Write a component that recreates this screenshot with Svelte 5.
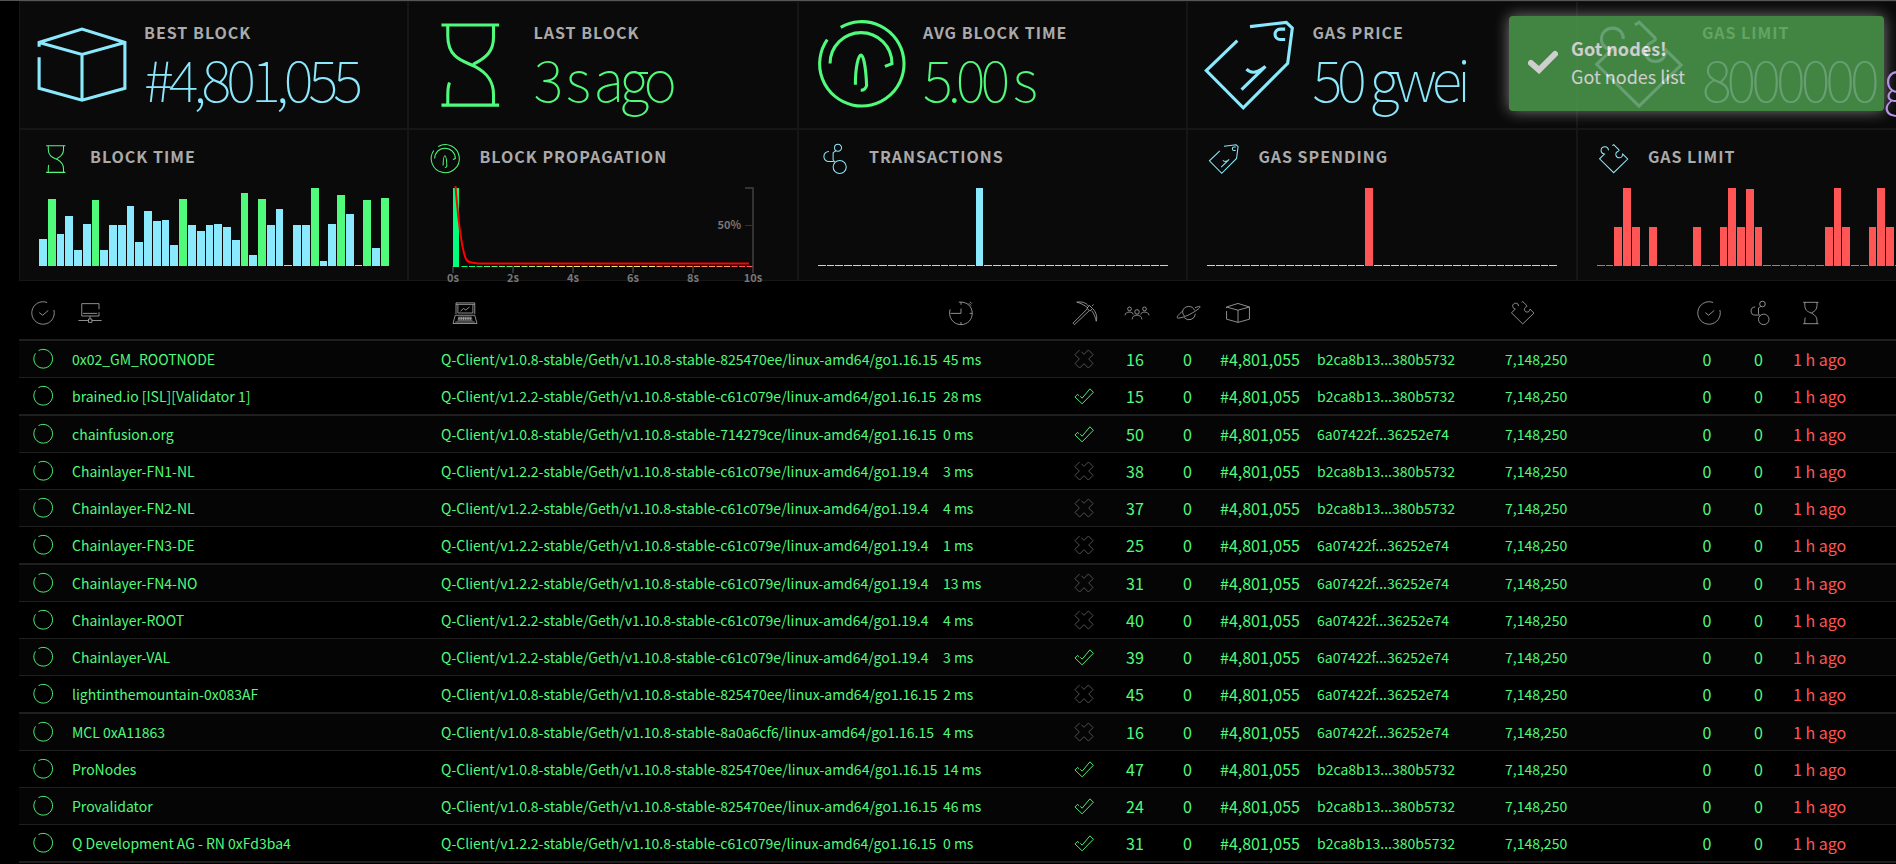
<script lang="ts">
  type Bar = { height: number; color: string };

  const CYAN = "#8be9fd";
  const GREEN = "#50fa7b";
  const RED = "#ff5555";

  const ring = (x: number, y: number, r: number) =>
    `M${x - r} ${y}a${r} ${r} 0 1 0 ${2 * r} 0a${r} ${r} 0 1 0 ${-2 * r} 0`;

  const icons: Record<string, string> = {
    block:
      "M1.5 19V16L32 6.5 62.5 16V48.5L32 57 1.5 48.5V26.5M1.5 16L32 24.5 62.5 16M32 24.5V57",
    hourglass:
      "M11 3.5h41M11 60.5h41M15.5 3.5v8C15.5 28 28 29.5 35 33.2 43 37.5 48 43 48 53v7.5M48 3.5v9C48 22 43 27 33.5 31.5M15.5 60.5v-7c0-4 .3-6.5 1.2-9",
    gauge:
      "M17.6 5.2A30 30 0 1 1 8 14M10 31A22 22 0 0 1 54 31L49 33M28 46C28 34 30 25 32 25S35.5 35 36 46.5C35.5 48.5 34 50 31.8 50",
    tag: "M32 4.7L57.8 1.7 62.1 5.7 58.8 30.8 27.2 62.4.9 36 23 14.7M57 6.5h-3.5a3.7 3.7 0 0 0 0 7.4H57M29.5 35C31 36.5 33 37.5 35.5 37 38.5 36.5 41 34.5 43 33L26 49.5",
    puzzle:
      "M28.4 3.6L31.4 1.6 42.5 12.5C44 14.5 41 15.3 38.8 16.6 33.5 20 35.5 29.5 43 29.5 47.5 29.5 50 26 50 23.5L50.5 21.5 61.2 32 31.3 61.2 1.2 31.5 11.6 21.4C1 19 3 5.8 12.5 5.8 17.5 5.8 20.5 9.5 20 13.5",
    molecule:
      ring(38.5, 8, 7.5) +
      ring(42, 49, 14) +
      "M19 16A10.5 10.5 0 1 0 19 37.500L29 37.500M34 14.500L28 18.500V34L32 39",
    checkCircle: "M61 24A30 30 0 1 1 43 4M22 31L31 38 46 25",
    circle: "M17.6 5.2A30 30 0 1 1 8 14",
    network: "M56 22V7H10V40H56V30M13 33H51M32 40v8M28 48h9v9h-9ZM1 52H28M37 52H63",
    laptop:
      "M8 35V5H58V35M8 9H58M13 10V32H53V10M20 27l8-7 6 4 10-8M6 38H58L64 60H0ZM14 43H50M13 47H51M12 51H52M16 43V51M22 43V51M28 43V51M34 43V51M40 43V51M46 43V51M6 56H58",
    stopwatch:
      "M3 22C-3 42 10 63 32 63 50 63 62 49 62 33 62 16 50 1 26 3M32 3v7M32 20V33H4M55 33h7M32 56v7M53 6l6 6M56 2l5 5",
    pickaxe:
      "M10 3C24 1 34 4 42 14M53 21C62 30 65 42 62 54M10 3C22 6 32 12 40 19M50 26C56 34 60 44 62 54M44 12l8 8-7 7-8-8ZM51 13l4-4M38 21L0 59l4 4L43 26",
    people:
      ring(12, 21, 5) +
      ring(52, 21, 5) +
      ring(32, 29, 6) +
      "M0 38C1 27 21 27 22 36M42 36C43 27 63 27 64 38M19 49C19 34 45 34 45 49",
    planet:
      "M15 27A17 17 0 0 1 47 25M19 44A17 17 0 0 0 49 34M15 27C-2 41-4 48 8 45 22 43 47 30 58 20 66 13 60 13 48 18M15 27C15 33 16 36 20 40",
    cross: "M24 9L32 17 46 3 61 18 47 32 61 46 46 61 32 47 18 61 3 46 17 32 3 18 18 3",
    check: "M20 33L26 39 51 9 62 20 26 57 3 35 11 27 16 31",
  };

  const flat = (peaks: Record<number, number>, color: string, rest = color): Bar[] =>
    Array.from({ length: 40 }, (_, i) =>
      peaks[i] ? { height: peaks[i], color } : { height: 1, color: rest },
    );

  const blockTimes: Bar[] = [
    27, 67, 32, 50, 16, 42, 66, 16, 41, 41, 60, 24, 55, 45, 46, 21, 67, 41, 35, 41,
    42, 39, 26, 73, 11, 67, 41, 57, 1, 41, 41, 78, 5, 42, 71, 52, 1, 66, 18, 68,
  ].map((height) => ({ height, color: height > 65 ? GREEN : CYAN }));

  const gasLimits = {
    2: 39, 3: 78, 4: 39, 6: 39, 11: 39, 14: 39, 15: 78, 16: 39, 17: 77, 18: 39,
    26: 39, 27: 78, 28: 39, 31: 39, 32: 78, 33: 39,
  };

  const stats = [
    { icon: "block", title: "Best block", value: "#4,801,055", tone: "info" },
    { icon: "hourglass", title: "Last block", value: "3 s ago", tone: "success" },
    { icon: "gauge", title: "Avg block time", value: "5.00 s", tone: "success" },
    { icon: "tag", title: "Gas price", value: "50 gwei", tone: "info" },
    { icon: "puzzle", title: "Gas limit", value: "8000000 gas", tone: "purple" },
  ];

  const charts: { icon: string; title: string; tone: string; bars?: Bar[] }[] = [
    { icon: "hourglass", title: "Block time", tone: "success", bars: blockTimes },
    { icon: "gauge", title: "Block propagation", tone: "success" },
    { icon: "molecule", title: "Transactions", tone: "info", bars: flat({ 18: 78 }, CYAN) },
    { icon: "tag", title: "Gas spending", tone: "info", bars: flat({ 18: 78 }, RED, CYAN) },
    { icon: "puzzle", title: "Gas limit", tone: "info", bars: flat(gasLimits, RED) },
  ];

  const propagationColor = (i: number) => {
    if (i < 3) return "#00ff7b";
    if (i < 7) return GREEN;
    if (i < 11) return "#a0f070";
    if (i < 26) return "#f1e670";
    if (i < 36) return "#ff9a55";
    return RED;
  };

  const columns = [
    { name: "state", label: "Status", icon: "checkCircle", center: true },
    { name: "node", label: "Node name", icon: "network" },
    { name: "client", label: "Node type", icon: "laptop" },
    { name: "latency", label: "Latency", icon: "stopwatch" },
    { name: "mining", label: "Mining", icon: "pickaxe", center: true },
    { name: "peers", label: "Peers", icon: "people", center: true },
    { name: "pending", label: "Pending transactions", icon: "planet", center: true },
    { name: "block", label: "Last block", icon: "block" },
    { name: "hash", label: "Block hash", icon: "" },
    { name: "gas", label: "Gas limit", icon: "puzzle" },
    { name: "valid", label: "Validated", icon: "checkCircle", center: true },
    { name: "txs", label: "Block transactions", icon: "molecule", center: true },
    { name: "time", label: "Last block time", icon: "hourglass" },
  ];

  const client = (version: string, commit: string, go: string) =>
    `Q-Client/${version}-stable/Geth/v1.10.8-stable-${commit}/linux-amd64/${go}`;

  const B2 = "b2ca8b13...380b5732";
  const A0 = "6a07422f...36252e74";
  const OLD = client("v1.0.8", "825470ee", "go1.16.15");
  const NEW = client("v1.2.2", "c61c079e", "go1.16.15");
  const NEW19 = client("v1.2.2", "c61c079e", "go1.19.4");

  const nodes = [
    { name: "0x02_GM_ROOTNODE", client: OLD, latency: 45, mining: false, peers: 16, hash: B2 },
    { name: "brained.io [ISL][Validator 1]", client: NEW, latency: 28, mining: true, peers: 15, hash: B2 },
    { name: "chainfusion.org", client: client("v1.0.8", "714279ce", "go1.16.15"), latency: 0, mining: true, peers: 50, hash: A0 },
    { name: "Chainlayer-FN1-NL", client: NEW19, latency: 3, mining: false, peers: 38, hash: B2 },
    { name: "Chainlayer-FN2-NL", client: NEW19, latency: 4, mining: false, peers: 37, hash: B2 },
    { name: "Chainlayer-FN3-DE", client: NEW19, latency: 1, mining: false, peers: 25, hash: A0 },
    { name: "Chainlayer-FN4-NO", client: NEW19, latency: 13, mining: false, peers: 31, hash: A0 },
    { name: "Chainlayer-ROOT", client: NEW19, latency: 4, mining: false, peers: 40, hash: A0 },
    { name: "Chainlayer-VAL", client: NEW19, latency: 3, mining: true, peers: 39, hash: A0 },
    { name: "lightinthemountain-0x083AF", client: OLD, latency: 2, mining: false, peers: 45, hash: A0 },
    { name: "MCL 0xA11863", client: client("v1.0.8", "8a0a6cf6", "go1.16.15"), latency: 4, mining: false, peers: 16, hash: A0 },
    { name: "ProNodes", client: OLD, latency: 14, mining: true, peers: 47, hash: B2 },
    { name: "Provalidator", client: OLD, latency: 46, mining: true, peers: 24, hash: B2 },
    { name: "Q Development AG - RN 0xFd3ba4", client: NEW, latency: 0, mining: true, peers: 31, hash: B2 },
  ];
</script>

{#snippet icon(name: string)}
  <svg class="icon" viewBox="0 0 64 64" aria-hidden="true"><path d={icons[name]} /></svg>
{/snippet}

<div class="page">
  <div class="grid">
    {#each stats as stat}
      <section class="cell stat {stat.tone}">
        {@render icon(stat.icon)}
        <div class="details">
          <h2>{stat.title}</h2>
          <p class="value">{stat.value}</p>
        </div>
      </section>
    {/each}

    {#each charts as chart}
      <section class="cell chart {chart.tone}">
        <header>
          {@render icon(chart.icon)}
          <h2>{chart.title}</h2>
        </header>
        {#if chart.bars}
          <div class="bars">
            {#each chart.bars as bar}
              <span style="height: {bar.height}px; background: {bar.color}"></span>
            {/each}
          </div>
        {:else}
          <svg class="propagation" width="300" height="78" viewBox="0 0 300 78">
            <g class="axis">
              {#each [0, 2, 4, 6, 8, 10] as second}
                <path d="M{second * 30} 78v7" />
                <text x={second * 30} y="94" text-anchor="middle">{second}s</text>
              {/each}
              <path d="M292 0H300V78" />
              <path class="thin" d="M292 37.500H300" />
              <text x="288" y="41" text-anchor="end">50%</text>
            </g>
            <rect width="6" height="79" fill="#00ff7b" />
            {#each { length: 39 } as _, i}
              <rect x={(i + 1) * 7.5 + 1} y="78" width="6" height="1" fill={propagationColor(i)} />
            {/each}
            <path class="line" d="M2.500-2C5 30 8 60 13 71 15 75 19 74.500 25 75.500H296" />
          </svg>
        {/if}
      </section>
    {/each}
  </div>

  <table>
    <colgroup>
      {#each columns as column}
        <col class="col-{column.name}" />
      {/each}
    </colgroup>
    <thead>
      <tr>
        {#each columns as column}
          <th scope="col" aria-label={column.label} class:center={column.center}>
            {#if column.icon}{@render icon(column.icon)}{/if}
          </th>
        {/each}
      </tr>
    </thead>
    <tbody>
      {#each nodes as node}
        <tr>
          <td class="center">{@render icon("circle")}</td>
          <td>{node.name}</td>
          <td class="client">{node.client}</td>
          <td>{node.latency} ms</td>
          <td class="center" class:idle={!node.mining}>
            {@render icon(node.mining ? "check" : "cross")}
          </td>
          <td class="center large">{node.peers}</td>
          <td class="center large">0</td>
          <td class="large">#4,801,055</td>
          <td>{node.hash}</td>
          <td>7,148,250</td>
          <td class="center large">0</td>
          <td class="center large">0</td>
          <td class="large late">1 h ago</td>
        </tr>
      {/each}
    </tbody>
  </table>

  <div class="toast" role="status">
    <svg viewBox="0 0 30 24" aria-hidden="true"><path d="M3 13l8 7L27 4" /></svg>
    <div>
      <strong>Got nodes!</strong>
      <p>Got nodes list</p>
    </div>
  </div>
</div>

<style>
  :global(body) {
    background: #000;
    overflow: hidden;
  }

  .page {
    position: relative;
    overflow: hidden;
    padding-left: 19px;
    border-top: 1px solid #555;
    font-family: "Noto Sans CJK SC", "Open Sans", sans-serif;
    color: #aaa;
  }

  .grid {
    display: grid;
    grid-template-columns: repeat(5, 20.75%);
  }

  .cell {
    box-sizing: border-box;
    min-width: 0;
    background: #0a0a0a;
    border: 1px solid #161616;
  }

  .info {
    --tone: #8be9fd;
  }

  .success {
    --tone: #50fa7b;
  }

  .purple {
    --tone: #bd93f9;
  }

  .icon {
    display: block;
    flex: none;
    overflow: visible;
    fill: none;
    stroke: var(--tone);
    stroke-width: 2.2;
  }

  h2,
  p {
    margin: 0;
  }

  h2 {
    font-size: 16px;
    line-height: 20px;
    font-weight: 700;
    letter-spacing: 1px;
    text-transform: uppercase;
    white-space: nowrap;
  }

  .stat {
    display: flex;
    gap: 17px;
    padding: 18px 17px;
  }

  .stat .icon {
    width: 90px;
    height: 90px;
  }

  .details {
    display: flex;
    flex-direction: column;
    gap: 3px;
    padding-top: 2px;
  }

  .value {
    font-size: 57px;
    line-height: 64px;
    font-weight: 100;
    letter-spacing: -5px;
    white-space: nowrap;
    color: var(--tone);
  }

  .chart {
    padding: 14px 19px;
  }

  .chart header {
    display: flex;
    align-items: flex-start;
    gap: 19px;
    padding-left: 2px;
    margin-bottom: 14px;
  }

  .chart h2 {
    line-height: 25px;
  }

  .chart .icon {
    width: 30px;
    height: 30px;
  }

  .bars {
    display: flex;
    align-items: flex-end;
    gap: 1px;
    height: 78px;
  }

  .bars span {
    flex: 1;
  }

  .propagation {
    display: block;
    margin-left: 25px;
    overflow: visible;
  }

  .axis path {
    fill: none;
    stroke: #333;
    stroke-width: 2;
  }

  .axis .thin {
    stroke-width: 1;
  }

  .axis text {
    font-size: 11px;
    font-weight: 700;
    fill: #777;
  }

  .line {
    fill: none;
    stroke: #f00;
    stroke-width: 2;
  }

  table {
    width: 100%;
    table-layout: fixed;
    border-collapse: separate;
    border-spacing: 0;
    font-size: 14px;
    line-height: 20px;
    color: #50fa7b;
    --tone: #50fa7b;
  }

  .col-state { width: 47px; }
  .col-client { width: 496px; }
  .col-latency { width: 121px; }
  .col-mining { width: 51px; }
  .col-peers { width: 52px; }
  .col-pending { width: 53px; }
  .col-block { width: 97px; }
  .col-hash { width: 188px; }
  .col-gas { width: 182px; }
  .col-valid { width: 52px; }
  .col-txs { width: 51px; }
  .col-time { width: 112px; }

  th,
  td {
    box-sizing: border-box;
    padding: 0 0 0 6px;
    text-align: left;
    white-space: nowrap;
    border-bottom: 1px solid #1f1f1f;
  }

  th {
    --tone: #aaa;
    height: 60px;
    padding: 5px 0 0 12px;
    border-bottom-width: 2px;
  }

  th:last-child {
    padding-left: 15px;
  }

  th .icon {
    width: 24px;
    height: 24px;
  }

  td {
    height: 37px;
  }

  tr:nth-child(4n + 2) td {
    height: 38px;
    border-bottom-width: 2px;
  }

  tr:nth-child(odd) td {
    background: #050505;
  }

  td .icon {
    width: 20px;
    height: 20px;
    stroke-width: 3;
  }

  .center {
    padding-left: 0;
    text-align: center;
  }

  th.center:not(:first-child) {
    padding-left: 3px;
  }

  .center .icon {
    margin: 0 auto;
  }

  .idle {
    --tone: #555;
  }

  .client {
    padding-left: 0;
  }

  .large {
    font-size: 16px;
  }

  .late {
    padding-left: 9px;
    color: #ff5555;
  }

  .toast {
    position: absolute;
    top: 15px;
    right: 12px;
    display: flex;
    align-items: center;
    gap: 13px;
    box-sizing: border-box;
    width: 375px;
    height: 95px;
    padding: 0 19px 3px;
    border-radius: 4px;
    background: #51a351;
    box-shadow: 0 0 15px #999;
    opacity: 0.8;
    color: #fff;
    font-size: 18px;
    line-height: 28px;
  }

  .toast svg {
    width: 30px;
    height: 24px;
    fill: none;
    stroke: #fff;
    stroke-width: 6;
    stroke-linecap: round;
  }
</style>
